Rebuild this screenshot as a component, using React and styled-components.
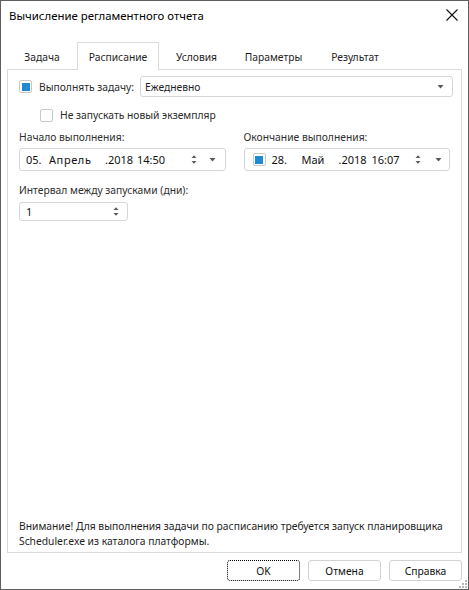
import React from "react";
import styled, { createGlobalStyle } from "styled-components";

const Global = createGlobalStyle`
  html, body { margin: 0; padding: 0; background: #fff; }
  body { font-family: "Noto Sans", "Open Sans", sans-serif; font-size: 10.3px; color: #1e1e1e; }
  * { box-sizing: border-box; }
`;

const Window = styled.div`
  position: relative;
  width: 469px;
  height: 590px;
  border: 1px solid #5e5e5e;
  background: #fff;
  display: flex;
  flex-direction: column;
`;

const TitleBar = styled.div`
  height: 31px;
  display: flex;
  align-items: center;
  justify-content: space-between;
  padding: 0 10px 0 8px;
`;

const Title = styled.div`
  font-size: 11.4px;
  color: #000;
  margin-top: -2px;
`;

const CloseBtn = styled.div`
  width: 12px;
  height: 12px;
  display: flex;
  margin-top: -4px;
`;

const TabRow = styled.div`
  margin-top: 10px;
  height: 27px;
  padding-left: 6px;
  display: flex;
  align-items: stretch;
`;

const Tab = styled.div`
  width: ${(p) => p.$w}px;
  display: flex;
  align-items: center;
  justify-content: center;
  color: #1e1e1e;
  position: relative;
  z-index: 1;
  padding-top: 1px;
  border: 1px solid ${(p) => (p.$active ? "#dadada" : "transparent")};
  border-bottom: none;
  background: ${(p) => (p.$active ? "#fff" : "transparent")};
  margin-bottom: ${(p) => (p.$active ? "-1px" : "0")};
`;

const Panel = styled.div`
  flex: 1;
  margin: 0 6px;
  border: 1px solid #dadada;
  display: flex;
  flex-direction: column;
  padding: 6px 11px 3px 11px;
`;

const Row = styled.div`
  display: flex;
  align-items: center;
  height: ${(p) => p.$h || 21}px;
  margin-top: ${(p) => p.$mt || 0}px;
  padding-left: ${(p) => p.$indent || 0}px;
`;

const Check = styled.span`
  width: 13px;
  height: 13px;
  border: 1px solid #c9c9c9;
  border-radius: 2px;
  background: #fff;
  display: inline-flex;
  align-items: center;
  justify-content: center;
  flex: none;
  margin-left: ${(p) => p.$ml || 0}px;
  &::after {
    content: "";
    width: 8px;
    height: 8px;
    background: ${(p) => (p.$checked ? "#1f8ad2" : "transparent")};
  }
`;

const CheckLabel = styled.span`
  margin-left: 7px;
  color: #2a2a2a;
  white-space: nowrap;
`;

const Combo = styled.div`
  flex: 1;
  height: 21px;
  margin-left: 6px;
  margin-right: -3px;
  border: 1px solid #d6d6d6;
  border-radius: 3px;
  display: flex;
  align-items: center;
  padding: 0 8px 0 4px;
  justify-content: space-between;
`;

const Columns = styled.div`
  display: grid;
  grid-template-columns: 1fr 1fr;
  column-gap: 18px;
  margin-top: 6px;
`;

const Field = styled.div`
  display: flex;
  flex-direction: column;
`;

const Label = styled.div`
  height: 16px;
  line-height: 16px;
  color: #2e2e2e;
  white-space: nowrap;
`;

const InputBox = styled.div`
  height: ${(p) => p.$h || 23}px;
  width: ${(p) => (p.$w ? p.$w + "px" : "auto")};
  margin-top: ${(p) => p.$mt || 3}px;
  border: 1px solid #d6d6d6;
  border-radius: 3px;
  display: flex;
  align-items: center;
  padding: 0 ${(p) => p.$pr || 7}px 0 6px;
`;

const DateText = styled.span`
  flex: 1;
  display: flex;
  align-items: center;
  white-space: pre;
  color: #111;
  font-size: 11px;
  margin-left: ${(p) => p.$ml || 0}px;
`;

const Seg = styled.span`
  width: ${(p) => (p.$w ? p.$w + "px" : "auto")};
  letter-spacing: ${(p) => p.$ls || 0}px;
  flex: none;
`;

const IconSlot = styled.span`
  display: inline-flex;
  width: ${(p) => p.$w || 10}px;
  justify-content: center;
  margin-left: ${(p) => p.$ml || 0}px;
`;

const IntervalField = styled.div`
  display: flex;
  flex-direction: column;
  margin-top: 11px;
`;

const Spacer = styled.div`
  flex: 1;
`;

const Note = styled.div`
  line-height: 15px;
  color: #1e1e1e;
  white-space: nowrap;
`;

const ButtonRow = styled.div`
  display: flex;
  justify-content: flex-end;
  gap: 8px;
  margin: 7px 6px 8px 0;
  height: 21px;
`;

const Button = styled.div`
  width: ${(p) => p.$w || 73}px;
  height: 21px;
  border: 1px ${(p) => (p.$focus ? "dotted #000" : "solid #d2d2d2")};
  border-radius: 3px;
  background: #fff;
  display: flex;
  align-items: center;
  justify-content: center;
  color: #111;
`;

const Grip = styled.div`
  position: absolute;
  right: 1px;
  bottom: 1px;
  width: 10px;
  height: 10px;
  display: flex;
`;

const Arrow = () => (
  <svg width="7" height="4" viewBox="0 0 7 4">
    <path d="M0.5 0 H6.5 L3.5 3.5 Z" fill="#5a5a5a" />
  </svg>
);

const Spin = () => (
  <svg width="6" height="11" viewBox="0 0 6 11">
    <path d="M0.5 4 H5.5 L3 1.2 Z" fill="#5a5a5a" />
    <path d="M0.5 7 H5.5 L3 9.8 Z" fill="#5a5a5a" />
  </svg>
);

export default function App() {
  return (
    <>
      <Global />
      <Window>
        <TitleBar>
          <Title>Вычисление регламентного отчета</Title>
          <CloseBtn>
            <svg width="12" height="12" viewBox="0 0 12 12">
              <path d="M0.5 0.5 L11.5 11.5 M11.5 0.5 L0.5 11.5" stroke="#111" strokeWidth="1.1" />
            </svg>
          </CloseBtn>
        </TitleBar>
        <TabRow>
          <Tab $w={70}>Задача</Tab>
          <Tab $w={82} $active>Расписание</Tab>
          <Tab $w={75}>Условия</Tab>
          <Tab $w={79}>Параметры</Tab>
          <Tab $w={84}>Результат</Tab>
        </TabRow>
        <Panel>
          <Row $h={21}>
            <Check $checked />
            <CheckLabel>Выполнять задачу:</CheckLabel>
            <Combo>
              <span>Ежедневно</span>
              <Arrow />
            </Combo>
          </Row>
          <Row $h={16} $mt={10} $indent={21}>
            <Check />
            <CheckLabel>Не запускать новый экземпляр</CheckLabel>
          </Row>
          <Columns>
            <Field>
              <Label>Начало выполнения:</Label>
              <InputBox>
                <DateText>
                  <Seg $w={23}>05.</Seg>
                  <Seg $w={56} $ls={0.6}>Апрель</Seg>
                  <Seg $w={32}>.2018</Seg>
                  <Seg>14:50</Seg>
                </DateText>
                <IconSlot $w={10}><Spin /></IconSlot>
                <IconSlot $w={10} $ml={9}><Arrow /></IconSlot>
              </InputBox>
            </Field>
            <Field>
              <Label>Окончание выполнения:</Label>
              <InputBox $pr={6}>
                <Check $checked $ml={2} />
                <DateText $ml={6}>
                  <Seg $w={30}>28.</Seg>
                  <Seg $w={37}>Май</Seg>
                  <Seg $w={33}>.2018</Seg>
                  <Seg>16:07</Seg>
                </DateText>
                <IconSlot $w={10}><Spin /></IconSlot>
                <IconSlot $w={10} $ml={10}><Arrow /></IconSlot>
              </InputBox>
            </Field>
          </Columns>
          <IntervalField>
            <Label>Интервал между запусками (дни):</Label>
            <InputBox $w={109} $h={19} $mt={4} $pr={6}>
              <DateText>1</DateText>
              <IconSlot $w={10}><Spin /></IconSlot>
            </InputBox>
          </IntervalField>
          <Spacer />
          <Note>
            Внимание! Для выполнения задачи по расписанию требуется запуск планировщика
            <br />
            Scheduler.exe из каталога платформы.
          </Note>
        </Panel>
        <ButtonRow>
          <Button $focus>OK</Button>
          <Button>Отмена</Button>
          <Button>Справка</Button>
        </ButtonRow>
        <Grip>
          <svg width="10" height="10" viewBox="0 0 10 10">
            {[
              [8, 0], [8, 3], [8, 6], [5, 3], [5, 6], [2, 6],
            ].map(([x, y], i) => (
              <rect key={i} x={x} y={y + 2} width="2" height="2" fill="#b8b8b8" />
            ))}
          </svg>
        </Grip>
      </Window>
    </>
  );
}
